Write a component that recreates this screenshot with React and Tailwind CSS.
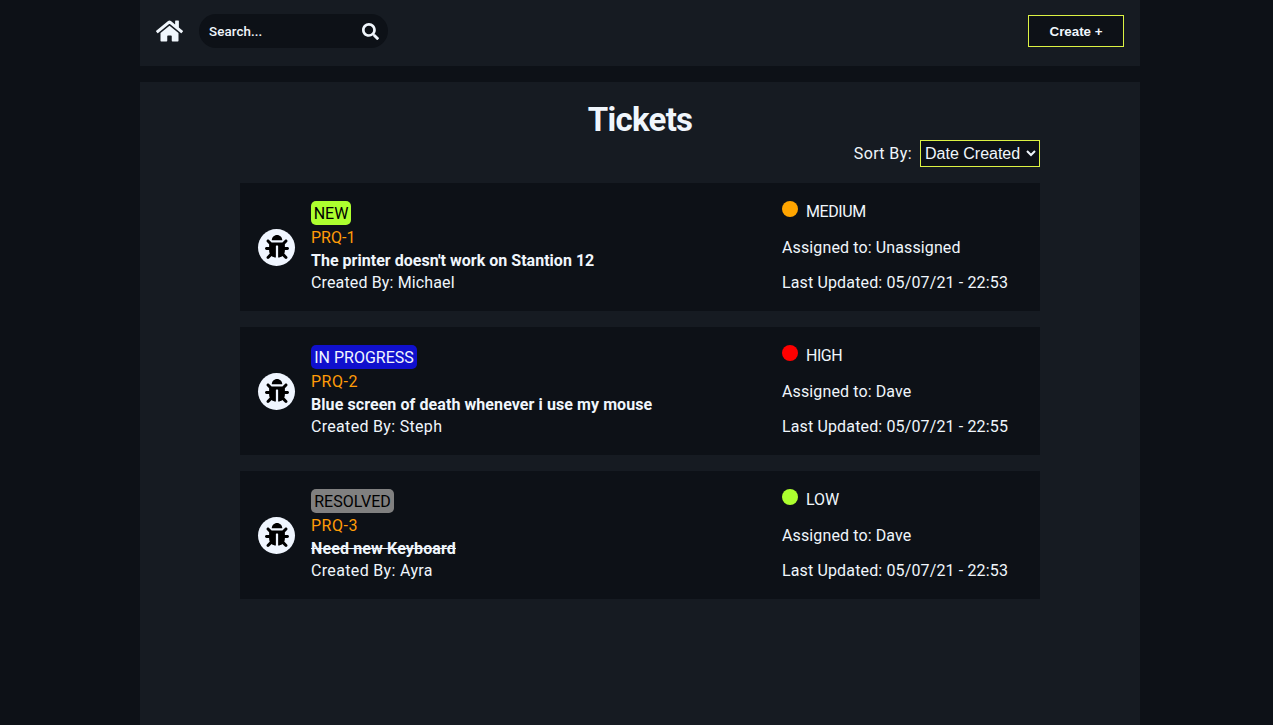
import React from "react";
import { FaBug, FaHome, FaSearch } from "react-icons/fa";

const tickets = [
  {
    id: "PRQ-1",
    idClass: "",
    status: "NEW",
    statusClass: "w-10 bg-[#adff2f] text-black",
    title: "The printer doesn't work on Stantion 12",
    titleClass: "tracking-[0.02px]",
    author: "Michael",
    authorClass: "tracking-[0.14px]",
    priority: "MEDIUM",
    priorityClass: "tracking-[-0.4px]",
    dotClass: "bg-[#ffa500]",
    assignee: "Unassigned",
    updated: "05/07/21 - 22:53",
  },
  {
    id: "PRQ-2",
    idClass: "tracking-[0.5px]",
    status: "IN PROGRESS",
    statusClass: "w-[106px] bg-[#1010cd] text-[#f0f5ff]",
    title: "Blue screen of death whenever i use my mouse",
    titleClass: "tracking-[0.08px]",
    author: "Steph",
    authorClass: "tracking-[0.31px]",
    priority: "HIGH",
    priorityClass: "tracking-[-0.5px]",
    dotClass: "bg-[#ff0000]",
    assignee: "Dave",
    updated: "05/07/21 - 22:55",
  },
  {
    id: "PRQ-3",
    idClass: "tracking-[0.5px]",
    status: "RESOLVED",
    statusClass: "w-[83px] bg-[#808080] text-black",
    title: "Need new Keyboard",
    titleClass: "tracking-[0.13px] line-through",
    author: "Ayra",
    authorClass: "tracking-[0.34px]",
    priority: "LOW",
    priorityClass: "",
    dotClass: "bg-[#adff2f]",
    assignee: "Dave",
    updated: "05/07/21 - 22:53",
  },
];

function Header() {
  return (
    <header className="flex h-[66px] items-start justify-between bg-[#161b22] px-4 pt-3.5">
      <div className="flex items-center">
        <FaHome className="h-6 w-[27px]" />
        <div className="ml-4 flex h-[34px] w-[189px] items-center justify-between rounded-full bg-[#0d1117] pr-[9px] pl-2.5">
          <input
            type="text"
            placeholder="Search..."
            className="w-32 bg-transparent pt-px font-['Roboto',sans-serif] text-[13.33px] font-medium tracking-[0.1px] outline-none placeholder:text-[#f0f6fc]"
          />
          <FaSearch className="size-[17px]" />
        </div>
      </div>
      <button className="mt-px h-8 w-24 border border-[#dcf243] bg-[#0d1117] pt-0.5 font-['Liberation_Sans',Arial,sans-serif] text-[13.33px] font-bold">
        Create +
      </button>
    </header>
  );
}

function TicketCard({ ticket }) {
  return (
    <article className="flex h-32 bg-[#0d1117] pl-[18px]">
      <div className="flex w-[53px] items-center">
        <div className="flex size-[37px] items-center justify-center rounded-full bg-[#f0f6ff] pb-px pl-px text-black">
          <FaBug className="size-6" />
        </div>
      </div>
      <div className="w-[471px] pt-[18px]">
        <div className={`flex h-6 items-center justify-center rounded-[5px] pt-px whitespace-nowrap ${ticket.statusClass}`}>
          {ticket.status}
        </div>
        <p className={`h-6 leading-[26px] text-[#ff9c08] ${ticket.idClass}`}>{ticket.id}</p>
        <h2 className={`h-[22px] leading-6 font-bold ${ticket.titleClass}`}>{ticket.title}</h2>
        <p className={`leading-6 ${ticket.authorClass}`}>Created By: {ticket.author}</p>
      </div>
      <div className="pt-[18px]">
        <div className="flex h-[35px] items-start gap-2">
          <span className={`size-4 rounded-full ${ticket.dotClass}`} />
          <span className={`leading-[22px] ${ticket.priorityClass}`}>{ticket.priority}</span>
        </div>
        <p className="h-[35px] leading-6 tracking-[0.12px]">Assigned to: {ticket.assignee}</p>
        <p className="leading-6 tracking-[0.14px]">Last Updated: {ticket.updated}</p>
      </div>
    </article>
  );
}

export default function App() {
  return (
    <div className="h-screen overflow-hidden bg-[#0d1117] pl-[140px] font-['Roboto',sans-serif] text-base text-[#f0f6fc]">
      <div className="flex h-full w-[1000px] flex-col gap-4">
        <Header />
        <main className="flex-1 bg-[#161b22] px-[100px] pt-[18px]">
          <h1 className="text-center text-[33px] leading-10 font-bold tracking-[-0.7px]">Tickets</h1>
          <div className="flex items-center justify-end gap-2">
            <label htmlFor="sort" className="tracking-[0.4px]">
              Sort By:
            </label>
            <select
              id="sort"
              className="h-[27px] w-[120px] border border-[#dcf243] bg-[#0d1117] font-['Liberation_Sans',Arial,sans-serif] text-base"
            >
              <option>Date Created</option>
            </select>
          </div>
          <div className="mt-4 flex flex-col gap-4">
            {tickets.map((ticket) => (
              <TicketCard key={ticket.id} ticket={ticket} />
            ))}
          </div>
        </main>
      </div>
    </div>
  );
}
